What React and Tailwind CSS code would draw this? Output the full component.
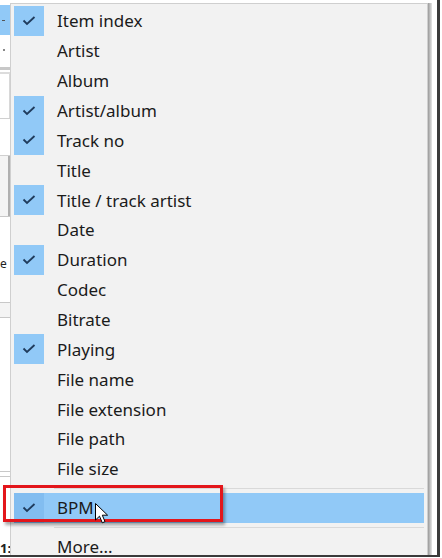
import React from 'react';

const items = [
  { label: 'Item index', checked: true },
  { label: 'Artist' },
  { label: 'Album' },
  { label: 'Artist/album', checked: true },
  { label: 'Track no', checked: true },
  { label: 'Title' },
  { label: 'Title / track artist', checked: true },
  { label: 'Date' },
  { label: 'Duration', checked: true },
  { label: 'Codec' },
  { label: 'Bitrate' },
  { label: 'Playing', checked: true },
  { label: 'File name' },
  { label: 'File extension' },
  { label: 'File path' },
  { label: 'File size' },
];

const Check = () => (
  <svg width="14" height="10" viewBox="0 0 14 10" fill="none">
    <path d="M1.5 4.5 L5 8 L12.5 1" stroke="#1f3b5c" strokeWidth="1.8" />
  </svg>
);

const MenuRow = ({ label, checked, active }) => (
  <div className={`flex items-center h-[29.87px] ${active ? 'bg-[#91c9f7]' : ''}`}>
    <div className={`w-[30px] h-full flex items-center justify-center ${checked ? (active ? 'bg-[#82bdf0]' : 'bg-[#91c9f7]') : ''}`}>
      {checked && <Check />}
    </div>
    <span className="ml-[13px] text-[17px] leading-none text-[#1b1b1b]">{label}</span>
  </div>
);

const Separator = () => (
  <div className="h-[9px] flex items-center pl-[40px]">
    <div className="h-px w-full bg-[#d9d9d9]" />
  </div>
);

const App = () => {
  // columns menu from the playlist header
  return (
    <div className="w-[442px] h-[558px] bg-white relative overflow-hidden flex flex-col" style={{ fontFamily: '"Noto Sans", "Liberation Sans", sans-serif' }}>
      <div className="flex h-[555px]">
        {/* the playlist behind the menu */}
        <div className="w-[10px] flex flex-col">
          <div className="h-[5px]" />
          <div className="h-[30px] bg-[#91c9f7] flex items-center pl-[2px]">
            <div className="w-[3px] h-px bg-[#555]" />
          </div>
          <div className="h-[14px]" />
          <div className="w-[2px] h-[2px] bg-[#888] ml-[3px]" />
          <div className="h-[16px]" />
          <div className="h-[3px] bg-[#c8c8c8]" />
          <div className="h-[2px]" />
          <div className="h-[2px] bg-[#dcdcdc]" />
          <div className="h-[44px] border-r border-[#d8d8d8]" />
          <div className="h-px bg-[#d0d0d0]" />
          <div className="h-[36px]" />
          <div className="h-px bg-[#d0d0d0]" />
          <div className="h-[60px] border-r-2 border-[#b0b0b0] bg-[#f4f4f4]" />
          <div className="h-px bg-[#c8c8c8]" />
          <div className="h-[41px]" />
          <div className="text-[12px] leading-none text-[#222]">e</div>
          <div className="h-[32px]" />
          <div className="h-px bg-[#c8c8c8]" />
          <div className="h-[14px] bg-[#f4f4f4]" />
          <div className="h-px bg-[#c8c8c8]" />
          <div className="h-[153px]" />
          <div className="h-px bg-[#c8c8c8]" />
          <div className="h-[4px]" />
          <div className="h-px bg-[#c8c8c8]" />
          <div className="flex-1 flex items-end">
            <span className="text-[13px] leading-none text-[#222] font-bold">1:</span>
          </div>
        </div>

        {/* context menu */}
        <div className="pt-[3px] flex">
          <div className="w-[418px] h-full bg-[#f2f2f2] border-l border-t border-r border-[#cfcfcf] pt-[2px] px-[3px]">
            {items.map((it) => (
              <MenuRow key={it.label} label={it.label} checked={it.checked} />
            ))}
            <Separator />
            <MenuRow label="BPM" checked active />
            <Separator />
            <MenuRow label="More..." />
          </div>
          <div className="w-[4px] bg-gradient-to-r from-[#9a9a9a] to-[#e6e6e6]" />
        </div>

        <div className="w-[5px]" />
        <div className="w-[3px] bg-[#3a3a3a]" />
      </div>
      <div className="h-[2px] bg-[#3a3a3a] w-[440px]" />

      {/* annotation */}
      <div className="absolute left-[3px] top-[485px] w-[220px] h-[37px] border-[3px] border-[#e3161b] shadow-[2px_3px_3px_rgba(0,0,0,0.35)]" />
      <svg className="absolute left-[95px] top-[503px]" width="14" height="23" viewBox="0 0 14 23">
        <path d="M0.5 0.5 L0.5 17 L4.5 13.2 L7.3 19.8 L10 18.6 L7.3 12.2 L12.6 12.2 Z" fill="#fff" stroke="#000" strokeWidth="1" strokeLinejoin="round" />
      </svg>
    </div>
  );
};

export default App;
